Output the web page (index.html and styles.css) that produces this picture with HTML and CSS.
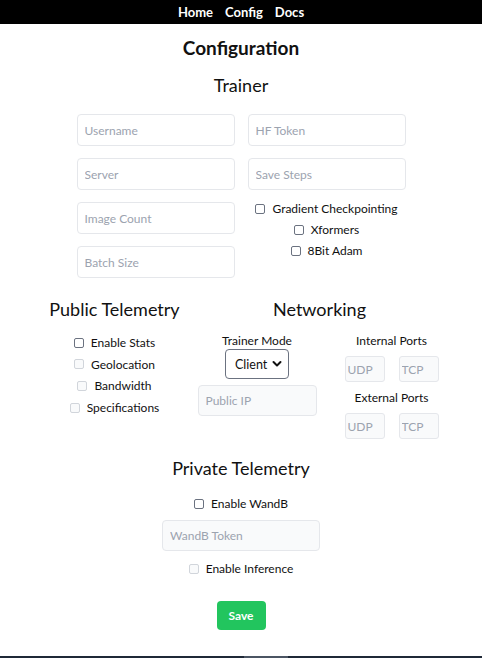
FILE: index.html
```html
<!DOCTYPE html>
<html lang="en">
<head>
<meta charset="utf-8">
<title>Configuration</title>
<link rel="stylesheet" href="styles.css">
</head>
<body>
<nav class="nav">
  <a href="#" class="nav-link">Home</a>
  <a href="#" class="nav-link">Config</a>
  <a href="#" class="nav-link">Docs</a>
</nav>
<main class="page">
  <h1 class="title">Configuration</h1>
  <h2 class="section-title">Trainer</h2>
  <div class="trainer-grid">
    <div class="col">
      <input class="field" type="text" placeholder="Username">
      <input class="field" type="text" placeholder="Server">
      <input class="field" type="text" placeholder="Image Count">
      <input class="field" type="text" placeholder="Batch Size">
    </div>
    <div class="col">
      <input class="field" type="text" placeholder="HF Token">
      <input class="field" type="text" placeholder="Save Steps">
      <div class="checks">
        <label class="check"><input type="checkbox" class="box"> Gradient Checkpointing</label>
        <label class="check"><input type="checkbox" class="box"> Xformers</label>
        <label class="check"><input type="checkbox" class="box"> 8Bit Adam</label>
      </div>
    </div>
  </div>

  <div class="split">
    <section class="public">
      <h2 class="section-title">Public Telemetry</h2>
      <div class="checks checks-public">
        <label class="check"><input type="checkbox" class="box"> Enable Stats</label>
        <label class="check"><input type="checkbox" class="box" disabled> Geolocation</label>
        <label class="check"><input type="checkbox" class="box" disabled> Bandwidth</label>
        <label class="check"><input type="checkbox" class="box" disabled> Specifications</label>
      </div>
    </section>
    <section class="network">
      <h2 class="section-title">Networking</h2>
      <div class="net-row">
        <div class="net-mode">
          <span class="small-label">Trainer Mode</span>
          <div class="select-wrap">
            <select class="select">
              <option>Client</option>
              <option>Server</option>
            </select>
            <svg class="chev" viewBox="0 0 10 10" width="10" height="10"><path d="M1.5 3 L5 6.5 L8.5 3" fill="none" stroke="#111" stroke-width="2" stroke-linecap="round" stroke-linejoin="round"/></svg>
          </div>
          <input class="field field-disabled field-ip" type="text" placeholder="Public IP" disabled>
        </div>
        <div class="net-ports">
          <span class="small-label">Internal Ports</span>
          <div class="ports">
            <input class="port" type="text" placeholder="UDP" disabled>
            <input class="port" type="text" placeholder="TCP" disabled>
          </div>
          <span class="small-label">External Ports</span>
          <div class="ports">
            <input class="port" type="text" placeholder="UDP" disabled>
            <input class="port" type="text" placeholder="TCP" disabled>
          </div>
        </div>
      </div>
    </section>
  </div>

  <section class="private">
    <h2 class="section-title">Private Telemetry</h2>
    <label class="check"><input type="checkbox" class="box"> Enable WandB</label>
    <input class="field field-disabled field-wandb" type="text" placeholder="WandB Token" disabled>
    <label class="check"><input type="checkbox" class="box" disabled> Enable Inference</label>
    <button class="save" type="button">Save</button>
  </section>
</main>
<footer class="footer"><span class="footer-mark"></span></footer>
</body>
</html>
```

FILE: styles.css
```css
* { box-sizing: border-box; }

html, body {
  margin: 0;
  padding: 0;
  background: #fff;
  font-family: "Lato", "Noto Sans", sans-serif;
  color: #111;
}

.nav {
  height: 24px;
  background: #000;
  display: flex;
  justify-content: center;
  align-items: center;
  gap: 12px;
}

.nav-link {
  color: #fff;
  text-decoration: none;
  font-weight: 700;
  font-size: 13px;
  line-height: 24px;
}

.page {
  display: flex;
  flex-direction: column;
  align-items: center;
}

.title {
  margin: 12px 0 0;
  font-size: 19px;
  line-height: 24px;
  font-weight: 700;
}

.section-title {
  margin: 0;
  font-size: 18px;
  line-height: 24px;
  font-weight: 400;
  text-align: center;
}

.title + .section-title { margin-top: 13px; }

.trainer-grid {
  margin-top: 17px;
  display: grid;
  grid-template-columns: 158px 158px;
  column-gap: 13px;
}

.col {
  display: flex;
  flex-direction: column;
  gap: 12px;
}

.field {
  width: 158px;
  height: 32px;
  border: 1px solid #e5e7eb;
  border-radius: 4px;
  padding: 0 7px;
  font-family: inherit;
  font-size: 12px;
  color: #111;
  background: #fff;
  outline: none;
}

.field::placeholder,
.port::placeholder { color: #9ca3af; opacity: 1; }

.field-disabled { background: #f9fafb; }

.checks {
  display: flex;
  flex-direction: column;
  align-items: center;
  margin-top: -4px;
}

.check {
  display: flex;
  align-items: center;
  gap: 7px;
  font-size: 12px;
  line-height: 21px;
  color: #111;
}

.box {
  -webkit-appearance: none;
  appearance: none;
  margin: 0;
  width: 10px;
  height: 10px;
  border: 1px solid #6b7280;
  border-radius: 2px;
  background: #fff;
}

.box:disabled { border-color: #d1d5db; background: #f9fafb; }

.split {
  margin-top: 19px;
  display: flex;
  gap: 9px;
}

.public { width: 148px; display: flex; flex-direction: column; align-items: center; }
.network { width: 244px; display: flex; flex-direction: column; align-items: center; }

.checks-public { margin-top: 11px; gap: 0.7px; }

.net-row {
  margin-top: 11px;
  display: flex;
  gap: 28px;
  align-self: flex-start;
}

.net-mode {
  width: 119px;
  display: flex;
  flex-direction: column;
  align-items: center;
}

.small-label {
  font-size: 12px;
  line-height: 17px;
}

.select-wrap {
  position: relative;
  width: 64px;
  height: 30px;
}

.select {
  -webkit-appearance: none;
  appearance: none;
  width: 64px;
  height: 30px;
  border: 1px solid #6b7280;
  border-radius: 4px;
  background: #fff;
  font-family: inherit;
  font-size: 12.5px;
  color: #111;
  padding: 0 0 0 9px;
}

.chev {
  position: absolute;
  right: 7px;
  top: 10px;
  pointer-events: none;
}

.field-ip {
  width: 119px;
  height: 31px;
  margin-top: 6px;
}

.net-ports {
  width: 94px;
  display: flex;
  flex-direction: column;
  align-items: center;
}

.ports {
  display: flex;
  gap: 14px;
  margin-top: 7px;
  margin-bottom: 7px;
}

.ports:last-child { margin-bottom: 0; }

.port {
  width: 40px;
  height: 26px;
  border: 1px solid #e5e7eb;
  border-radius: 3px;
  background: #f9fafb;
  padding: 0 2px;
  font-family: inherit;
  font-size: 12px;
}

.private {
  margin-top: 17px;
  display: flex;
  flex-direction: column;
  align-items: center;
}

.private .section-title + .check { margin-top: 13px; }

.field-wandb { margin-top: 6px; height: 31px; }
.field-wandb + .check { margin-top: 7px; }

.save {
  margin-top: 22px;
  width: 49px;
  height: 29px;
  border: none;
  border-radius: 4px;
  background: #22c55e;
  color: #fff;
  font-family: inherit;
  font-weight: 700;
  font-size: 12px;
}

.footer {
  margin-top: 26px;
  height: 4px;
  background: #1f2937;
  display: flex;
  justify-content: center;
}

.footer-mark {
  width: 44px;
  background: #4b5563;
  margin-left: 50px;
}
```
